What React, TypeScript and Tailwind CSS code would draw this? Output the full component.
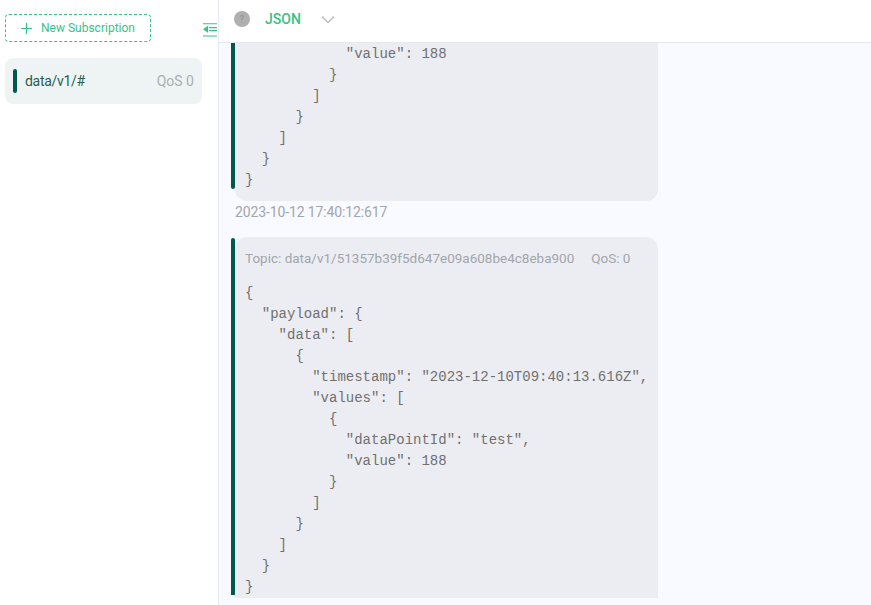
import React from "react";

const Line = ({ t }: { t: string }) => <div className="h-[21px] whitespace-pre">{t}</div>;

const second = [
  "{",
  '  "payload": {',
  '    "data": [',
  "      {",
  '        "timestamp": "2023-12-10T09:40:13.616Z",',
  '        "values": [',
  "          {",
  '            "dataPointId": "test",',
  '            "value": 188',
  "          }",
  "        ]",
  "      }",
  "    ]",
  "  }",
  "}",
];
const first = ['            "value": 188', "          }", "        ]", "      }", "    ]", "  }", "}"];

export default function App() {
  return (
    <div className="flex h-[605px] w-[871px] overflow-hidden bg-white font-['Roboto',sans-serif]">
      <aside className="relative w-[219px] shrink-0 border-r border-[#e6e8f1] bg-white">
        <div className="pl-[5px] pt-[14px]">
          <button className="flex h-[28px] w-[146px] items-center justify-center gap-[8px] rounded-[4px] border border-dashed border-[#34c388] pr-[1px] text-[12px] text-[#34c388]">
            <svg width="13" height="13" viewBox="0 0 13 13" fill="none" stroke="#34c388" strokeWidth="1.2"><path d="M6.5 1v11M1 6.5h11" /></svg>
            New Subscription
          </button>
          <div className="mt-[16px] flex h-[46px] w-[197px] items-center rounded-[8px] bg-[#eef4f4] pl-[8px] pr-[8px]">
            <span className="h-[24px] w-[4px] rounded-[2px] bg-[#00594a]" />
            <span className="ml-[8px] text-[14px] tracking-[-0.3px] text-[#2c5b51]">data/v1/#</span>
            <span className="ml-auto text-[14px] text-[#a8b0b2]">QoS 0</span>
          </div>
        </div>
        <svg className="absolute left-[203px] top-[23px]" width="14" height="14" viewBox="0 0 14 14" fill="none" stroke="#34c388" strokeWidth="1.1">
          <path d="M0 .8h14M6 4.6h8M6 7.6h8M0 13h14" />
          <path d="M4.6 3.6 1 6.2l3.6 2.6z" fill="#34c388" />
        </svg>
      </aside>
      <main className="flex min-w-0 flex-1 flex-col bg-[#f9faff]">
        <header className="flex h-[43px] shrink-0 items-center border-b border-[#e6e8f1] bg-white pb-[4px] pl-[15px]">
          <span className="flex h-[16px] w-[16px] items-center justify-center rounded-full bg-[#b0b0b0] text-[9px] leading-none text-[#8f8f8f]">?</span>
          <span className="ml-[15px] text-[14px] font-medium text-[#34c388]">JSON</span>
          <svg className="ml-[20px]" width="14" height="9" viewBox="0 0 14 9" fill="none" stroke="#b9bdc0" strokeWidth="1.4"><path d="M1 1.5l6 6 6-6" /></svg>
        </header>
        <div className="relative ml-[16px] h-[158px] w-[423px] shrink-0 rounded-b-[12px] bg-[#ecedf2] pl-[10px] font-['Liberation_Mono',monospace] text-[14px] leading-[21px] text-[#707070]">
          <span className="absolute -left-[4px] top-0 h-[146px] w-[4px] rounded-b-[2px] bg-[#00594a]" />
          <div className="pt-[1px]">{first.map((t, i) => <Line key={i} t={t} />)}</div>
        </div>
        <div className="ml-[16px] mt-[1px] h-[35px] shrink-0 text-[14px] leading-[20px] tracking-[-0.13px] text-[#a1a6ab]">2023-10-12 17:40:12:617</div>
        <div className="relative ml-[16px] h-[361px] w-[423px] shrink-0 rounded-t-[12px] bg-[#ecedf2] pl-[10px] pt-[11px]">
          <span className="absolute -left-[4px] top-[1px] h-[357px] w-[4px] rounded-t-[2px] bg-[#00594a]" />
          <div className="flex text-[13.5px] leading-[20px] text-[#a1a6ab]">
            <span>Topic: data/v1/51357b39f5d647e09a608be4c8eba900</span>
            <span className="ml-[17px]">QoS: 0</span>
          </div>
          <div className="mt-[15px] font-['Liberation_Mono',monospace] text-[14px] leading-[21px] text-[#707070]">
            {second.map((t, i) => <Line key={i} t={t} />)}
          </div>
        </div>
      </main>
    </div>
  );
}
